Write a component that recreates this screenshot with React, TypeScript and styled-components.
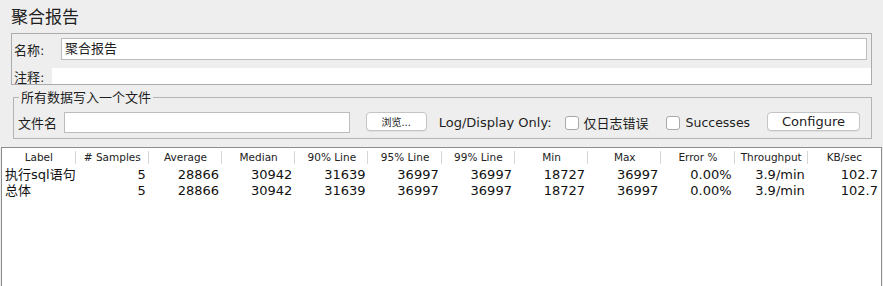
import React from 'react';
import styled, { createGlobalStyle } from 'styled-components';

const GlobalStyle = createGlobalStyle`
  html, body {
    margin: 0;
    padding: 0;
    background: #eeeeee;
    overflow: hidden;
  }
  body {
    font-family: "DejaVu Sans", "Noto Sans CJK SC", sans-serif;
    color: #1e1e1e;
  }
`;

const Page = styled.div`
  width: 883px;
  height: 286px;
  display: flex;
  flex-direction: column;
`;

const Title = styled.div`
  font-size: 17px;
  line-height: 22px;
  padding: 6px 0 0 11px;
  height: 27px;
  box-sizing: border-box;
`;

const NamePanel = styled.div`
  margin: 6px 11px 0 11px;
  border: 1px solid #ababab;
  display: flex;
  flex-direction: column;
`;

const NameRow = styled.div`
  display: flex;
  align-items: center;
  height: 22px;
  margin: 4px 4px 0 0;
`;

const CommentRow = styled.div`
  display: flex;
  align-items: center;
  height: 16px;
  margin-top: 8px;
`;

const FieldLabel = styled.span<{ $width: number }>`
  width: ${(p) => p.$width}px;
  flex: none;
  box-sizing: border-box;
  padding-left: 2px;
  font-size: 13px;
`;

const NameInput = styled.div`
  flex: 1;
  height: 22px;
  box-sizing: border-box;
  border: 1px solid #bcbcbc;
  background: #fff;
  font-size: 13px;
  line-height: 20px;
  padding-left: 3px;
`;

const CommentField = styled.div`
  flex: 1;
  height: 16px;
  background: #fff;
`;

const Group = styled.fieldset`
  margin: 5px 11px 0 13px;
  border: 1px solid #b4b4b4;
  padding: 7px 11px 5px 4px;
  min-width: 0;

  legend {
    font-size: 13px;
    padding: 0 2px;
    margin-left: 1px;
    line-height: 15px;
  }
`;

const FileRow = styled.div`
  display: flex;
  align-items: center;
  height: 21px;
`;

const Text = styled.span<{ $ml?: number; $size?: number }>`
  margin-left: ${(p) => p.$ml ?? 0}px;
  font-size: ${(p) => p.$size ?? 12}px;
  white-space: nowrap;
`;

const FileInput = styled.div`
  margin-left: 7px;
  width: 286px;
  height: 21px;
  box-sizing: border-box;
  border: 1px solid #bcbcbc;
  background: #fff;
`;

const Button = styled.div<{ $width: number; $ml: number; $size: number }>`
  margin-left: ${(p) => p.$ml}px;
  width: ${(p) => p.$width}px;
  height: 19px;
  align-self: flex-start;
  box-sizing: border-box;
  border: 1px solid #c4c4c4;
  border-radius: 4px;
  background: #fff;
  box-shadow: 0 1px 0 rgba(0, 0, 0, 0.06);
  display: flex;
  align-items: center;
  justify-content: center;
  font-size: ${(p) => p.$size}px;
  color: #222;
`;

const Checkbox = styled.span<{ $ml: number }>`
  margin-left: ${(p) => p.$ml}px;
  width: 14px;
  height: 14px;
  box-sizing: border-box;
  border: 1px solid #a9a9a9;
  border-radius: 3px;
  background: #fff;
  flex: none;
`;

const Table = styled.div`
  margin: 8px 1px 0 1px;
  flex: 1;
  background: #fff;
  border: 1px solid #8c8c8c;
  border-bottom: none;
`;

const Grid = styled.div`
  display: grid;
  grid-template-columns: repeat(12, 1fr);
`;

const HeadCell = styled.div<{ $last?: boolean }>`
  height: 18px;
  line-height: 19px;
  font-size: 10.5px;
  text-align: center;
  white-space: nowrap;
  overflow: hidden;
  color: #222;
  background: ${(p) =>
    p.$last ? 'none' : 'linear-gradient(#d6d6d6, #d6d6d6) right center / 1px 13px no-repeat'};
`;

const Cell = styled.div<{ $left?: boolean }>`
  height: 16px;
  line-height: 17px;
  font-size: 13px;
  white-space: nowrap;
  text-align: ${(p) => (p.$left ? 'left' : 'right')};
  padding: ${(p) => (p.$left ? '0 0 0 3px' : '0 3px 0 0')};
  color: #111;
`;

const headers = [
  'Label',
  '# Samples',
  'Average',
  'Median',
  '90% Line',
  '95% Line',
  '99% Line',
  'Min',
  'Max',
  'Error %',
  'Throughput',
  'KB/sec',
];

const rows = [
  ['执行sql语句', '5', '28866', '30942', '31639', '36997', '36997', '18727', '36997', '0.00%', '3.9/min', '102.7'],
  ['总体', '5', '28866', '30942', '31639', '36997', '36997', '18727', '36997', '0.00%', '3.9/min', '102.7'],
];

const App = () => {
  return (
    <Page>
      <GlobalStyle />
      <Title>聚合报告</Title>
      <NamePanel>
        <NameRow>
          <FieldLabel $width={49}>名称:</FieldLabel>
          <NameInput>聚合报告</NameInput>
        </NameRow>
        <CommentRow>
          <FieldLabel $width={40}>注释:</FieldLabel>
          <CommentField />
        </CommentRow>
      </NamePanel>
      <Group>
        <legend>所有数据写入一个文件</legend>
        <FileRow>
          <Text $size={13}>文件名</Text>
          <FileInput />
          <Button $width={61} $ml={16} $size={10}>浏览...</Button>
          <Text $ml={12} $size={13}>Log/Display Only:</Text>
          <Checkbox $ml={13} />
          <Text $ml={5} $size={13}>仅日志错误</Text>
          <Checkbox $ml={17} />
          <Text $ml={6} $size={12.5}>Successes</Text>
          <Button $width={93} $ml={17} $size={13}>Configure</Button>
        </FileRow>
      </Group>
      <Table>
        <Grid>
          {headers.map((h, i) => (
            <HeadCell key={h} $last={i === headers.length - 1}>
              {h}
            </HeadCell>
          ))}
          {rows.map((r) =>
            r.map((v, i) => (
              <Cell key={r[0] + i} $left={i === 0}>
                {v}
              </Cell>
            )),
          )}
        </Grid>
      </Table>
    </Page>
  );
};

export default App;
